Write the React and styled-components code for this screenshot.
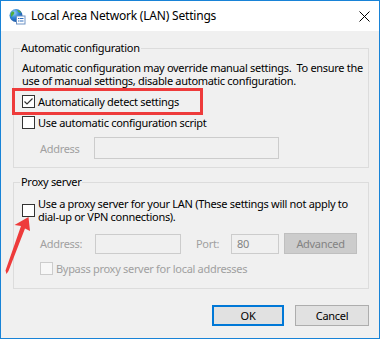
import React from "react";
import styled, { createGlobalStyle } from "styled-components";

const FONT = `"Noto Sans", "Liberation Sans", sans-serif`;

const Global = createGlobalStyle`
  html, body { margin: 0; padding: 0; background: #ffffff; }
  body { font-family: ${FONT}; }
  * { box-sizing: border-box; }
`;

const Window = styled.div`
  position: relative;
  width: 380px;
  height: 339px;
  border: 1px solid #1883d7;
  background: #f0f0f0;
  display: flex;
  flex-direction: column;
  font-family: ${FONT};
  font-size: 11px;
  letter-spacing: -0.3px;
  color: #000;
  overflow: hidden;
`;

const TitleBar = styled.div`
  height: 30px;
  flex: none;
  background: #ffffff;
  display: flex;
  align-items: center;
  padding: 0 9px 0 8px;
`;

const TitleText = styled.div`
  flex: 1;
  margin-left: 5px;
  font-size: 12px;
  letter-spacing: -0.2px;
  line-height: 16px;
  white-space: nowrap;
`;

const Body = styled.div`
  flex: 1;
  display: flex;
  flex-direction: column;
  padding: 9px 10px 0 12px;
`;

const Group = styled.fieldset`
  margin: ${(p) => (p.$first ? "0" : "6px")} 0 0 0;
  padding: 0 8px ${(p) => p.$bottom}px 8px;
  border: 1px solid #dcdcdc;
  min-width: 0;
  display: flex;
  flex-direction: column;
`;

const Legend = styled.legend`
  padding: 0 1px;
  margin-left: -2px;
  line-height: 16px;
`;

const Description = styled.div`
  margin-top: 5px;
  line-height: 13px;
  white-space: nowrap;
`;

const CheckRow = styled.div`
  position: relative;
  display: flex;
  align-items: center;
  margin-top: ${(p) => p.$top}px;
  padding-left: ${(p) => p.$indent || 0}px;
  color: ${(p) => (p.$disabled ? "#a0a0a0" : "#000")};
`;

const Label = styled.span`
  margin-left: 3px;
  line-height: 13px;
  white-space: nowrap;
`;

const Box = styled.span`
  flex: none;
  width: 13px;
  height: 13px;
  border: 1px solid ${(p) => (p.$disabled ? "#cccccc" : "#333333")};
  background: ${(p) => (p.$disabled ? "#f7f7f7" : "#ffffff")};
  display: flex;
  align-items: center;
  justify-content: center;
`;

const Highlight = styled.div`
  position: absolute;
  left: -10px;
  top: -7px;
  width: 191px;
  height: 27px;
  border: 3px solid #ee3b3b;
  pointer-events: none;
`;

const FieldRow = styled.div`
  display: flex;
  align-items: center;
  margin-top: ${(p) => p.$top}px;
  padding-left: 18px;
`;

const FieldLabel = styled.span`
  flex: none;
  width: ${(p) => p.$w}px;
  margin-left: ${(p) => p.$ml || 0}px;
  color: #a0a0a0;
  white-space: nowrap;
`;

const Input = styled.div`
  flex: none;
  width: ${(p) => p.$w}px;
  height: ${(p) => p.$h}px;
  border: 1px solid #cccccc;
  background: #f0f0f0;
  color: #838383;
  display: flex;
  align-items: center;
  padding-left: 5px;
`;

const DisabledButton = styled.div`
  flex: none;
  width: 73px;
  height: 21px;
  margin-left: 5px;
  background: #cccccc;
  border: 1px solid #bfbfbf;
  color: #838383;
  display: flex;
  align-items: center;
  justify-content: center;
`;

const Footer = styled.div`
  display: flex;
  justify-content: flex-end;
  gap: 11px;
  margin-top: 16px;
`;

const Button = styled.div`
  width: ${(p) => p.$w}px;
  height: 21px;
  background: #e1e1e1;
  border: ${(p) => (p.$default ? "2px solid #0078d7" : "1px solid #adadad")};
  display: flex;
  align-items: center;
  justify-content: center;
  color: #000;
`;

const Arrow = styled.svg`
  position: absolute;
  left: -1px;
  top: 209px;
  pointer-events: none;
`;

function CheckBox({ checked, disabled }) {
  return (
    <Box $disabled={disabled}>
      {checked && (
        <svg width="11" height="11" viewBox="0 0 11 11">
          <path d="M1.5 5.5 L4 8 L9.5 2.5" fill="none" stroke="#333" strokeWidth="1.2" />
        </svg>
      )}
    </Box>
  );
}

function AppIcon() {
  return (
    <svg width="17" height="17" viewBox="0 0 17 17">
      <defs>
        <radialGradient id="g" cx="0.35" cy="0.3" r="0.75">
          <stop offset="0" stopColor="#9fd3f7" />
          <stop offset="0.5" stopColor="#2f86d6" />
          <stop offset="1" stopColor="#1a4f9c" />
        </radialGradient>
      </defs>
      <circle cx="7" cy="7.5" r="6.5" fill="url(#g)" />
      <path d="M3 3.5 C5 3 6 4.5 5 6 C4 7 3 8 2.5 9 C1.5 7.5 1.5 5 3 3.5 Z" fill="#4fae3a" />
      <path d="M8 2 C10 2 11.5 3 12 4.5 C10.5 5 9 4 8 2 Z" fill="#4fae3a" />
      <rect x="7.5" y="8" width="8.5" height="8" fill="#ffffff" stroke="#6f93c4" strokeWidth="1" />
      <rect x="9" y="10" width="1.5" height="1" fill="#2f6fc0" />
      <rect x="11" y="10" width="3.5" height="1" fill="#2f6fc0" />
      <rect x="9" y="12.5" width="1.5" height="1" fill="#2f6fc0" />
      <rect x="11" y="12.5" width="3.5" height="1" fill="#2f6fc0" />
    </svg>
  );
}

function CloseIcon() {
  return (
    <svg width="11" height="11" viewBox="0 0 11 11">
      <path d="M0.5 0.5 L10.5 10.5 M10.5 0.5 L0.5 10.5" stroke="#000" strokeWidth="1" />
    </svg>
  );
}

export default function App() {
  return (
    <>
      <Global />
      <Window>
        <TitleBar>
          <AppIcon />
          <TitleText>Local Area Network (LAN) Settings</TitleText>
          <CloseIcon />
        </TitleBar>
        <Body>
          <Group $first $bottom={8}>
            <Legend>Automatic configuration</Legend>
            <Description>
              Automatic configuration may override manual settings.&nbsp; To ensure the
              <br />
              use of manual settings, disable automatic configuration.
            </Description>
            <CheckRow $top={8}>
              <CheckBox checked />
              <Label>Automatically detect settings</Label>
              <Highlight />
            </CheckRow>
            <CheckRow $top={8}>
              <CheckBox />
              <Label>Use automatic configuration script</Label>
            </CheckRow>
            <FieldRow $top={8}>
              <FieldLabel $w={54}>Address</FieldLabel>
              <Input $w={185} $h={22} />
            </FieldRow>
          </Group>
          <Group $bottom={13}>
            <Legend>Proxy server</Legend>
            <CheckRow $top={7}>
              <CheckBox />
              <Label>
                Use a proxy server for your LAN (These settings will not apply to
                <br />
                dial-up or VPN connections).
              </Label>
            </CheckRow>
            <FieldRow $top={10}>
              <FieldLabel $w={55}>Address:</FieldLabel>
              <Input $w={86} $h={20} />
              <FieldLabel $w={35} $ml={15}>Port:</FieldLabel>
              <Input $w={48} $h={20}>80</Input>
              <DisabledButton>Advanced</DisabledButton>
            </FieldRow>
            <CheckRow $top={8} $indent={18} $disabled>
              <CheckBox disabled />
              <Label>Bypass proxy server for local addresses</Label>
            </CheckRow>
          </Group>
          <Footer>
            <Button $w={72} $default>OK</Button>
            <Button $w={74}>Cancel</Button>
          </Footer>
        </Body>
        <Arrow width="40" height="70" viewBox="0 0 40 70">
          <polygon
            points="28.5,7 30,21 25,18.5 8.5,61 6.5,64 5.5,60.5 21,16 14.5,15"
            fill="#ee3b3b"
          />
        </Arrow>
      </Window>
    </>
  );
}
